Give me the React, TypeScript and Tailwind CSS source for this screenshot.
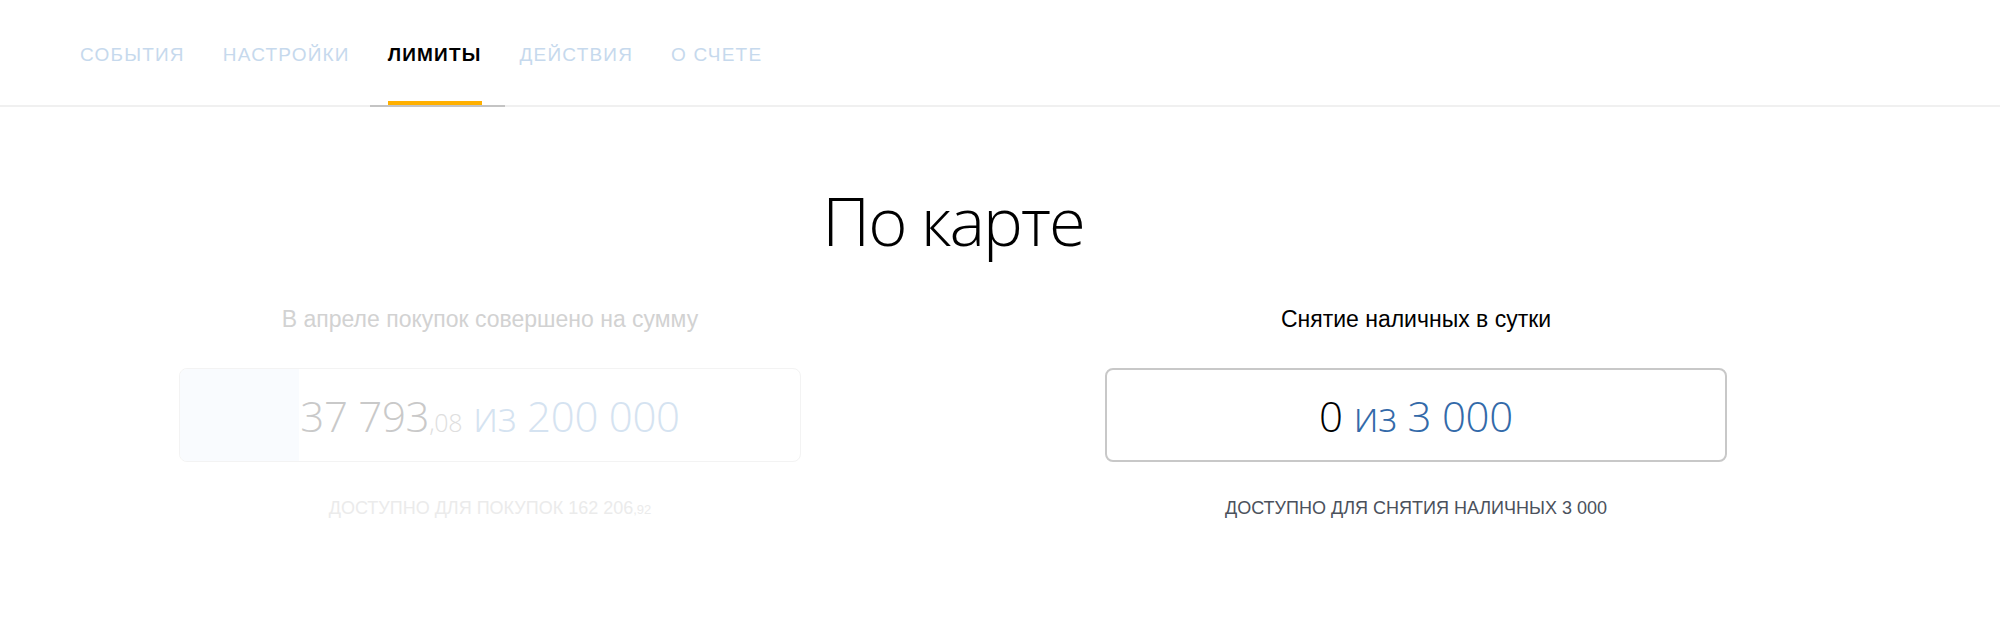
const tabs = ["События", "Настройки", "Лимиты", "Действия", "О счете"];

const App = () => {
    const active = 2;

    return (
        <div className="w-[2000px] h-[634px] bg-white font-['Liberation_Sans',sans-serif]">
            {/* Tabs */}
            <nav className="flex h-[107px] gap-[38px] border-b-2 border-[#f0f0f0] pl-[80px] pt-[5px]">
                {tabs.map((tab, idx) => (
                    <div key={tab} className="relative flex items-center">
                        <span
                            className={`text-[19px] uppercase ${idx === active ? "font-bold text-black tracking-[1.2px]" : "tracking-[1.2px] text-[#c6d9ed]"}`}
                        >
                            {tab}
                        </span>
                        {idx === active && (
                            <>
                                <div className="absolute bottom-0 left-0 right-0 h-[4px] bg-[#ffb000]" />
                                <div className="absolute -bottom-[2px] -left-[18px] -right-[23px] h-[2px] bg-[#c4c4c4]" />
                            </>
                        )}
                    </div>
                ))}
            </nav>

            <main className="ml-[179px] w-[1548px]">
                <h1 className="mt-[80px] text-center font-['Open_Sans',sans-serif] text-[67px] font-light leading-none tracking-[-2px] text-black">
                    По карте
                </h1>

                <div className="mt-[51px] flex justify-between">
                    {/* Purchases */}
                    <div className="flex w-[622px] flex-col items-center">
                        <p className="text-[23px] leading-[28px] text-[#d2d2d2]">
                            В апреле покупок совершено на сумму
                        </p>
                        <div className="relative mt-[35px] flex h-[94px] w-full items-center justify-center overflow-hidden rounded-lg border border-[#f3f3f3]">
                            <div className="absolute inset-y-0 left-0 w-[119px] bg-[#f9fbfe]" />
                            <span className="relative font-['Open_Sans',sans-serif] text-[42px] font-light tracking-[-0.3px]">
                                <span className="text-[#c9c9c9]">37 793</span>
                                <span className="text-[25px] text-[#dedede]">,08</span>
                                <span className="text-[#d5e3f1]"> из 200 000</span>
                            </span>
                        </div>
                        <p className="mt-[33px] text-[18px] uppercase text-[#ebebeb]">
                            Доступно для покупок 162 206<span className="text-[13px]">,92</span>
                        </p>
                    </div>

                    {/* Cash */}
                    <div className="flex w-[622px] flex-col items-center">
                        <p className="text-[23px] leading-[28px] text-black">Снятие наличных в сутки</p>
                        <div className="mt-[35px] flex h-[94px] w-full items-center justify-center rounded-lg border-2 border-[#c8c8c8]">
                            <span className="font-['Open_Sans',sans-serif] text-[42px] font-light tracking-[-0.3px]">
                                <span className="text-black">0</span>
                                <span className="text-[#336aa9]"> из 3 000</span>
                            </span>
                        </div>
                        <p className="mt-[33px] text-[18px] uppercase text-[#4b515c]">
                            Доступно для снятия наличных 3 000
                        </p>
                    </div>
                </div>
            </main>
        </div>
    );
};

export default App;
